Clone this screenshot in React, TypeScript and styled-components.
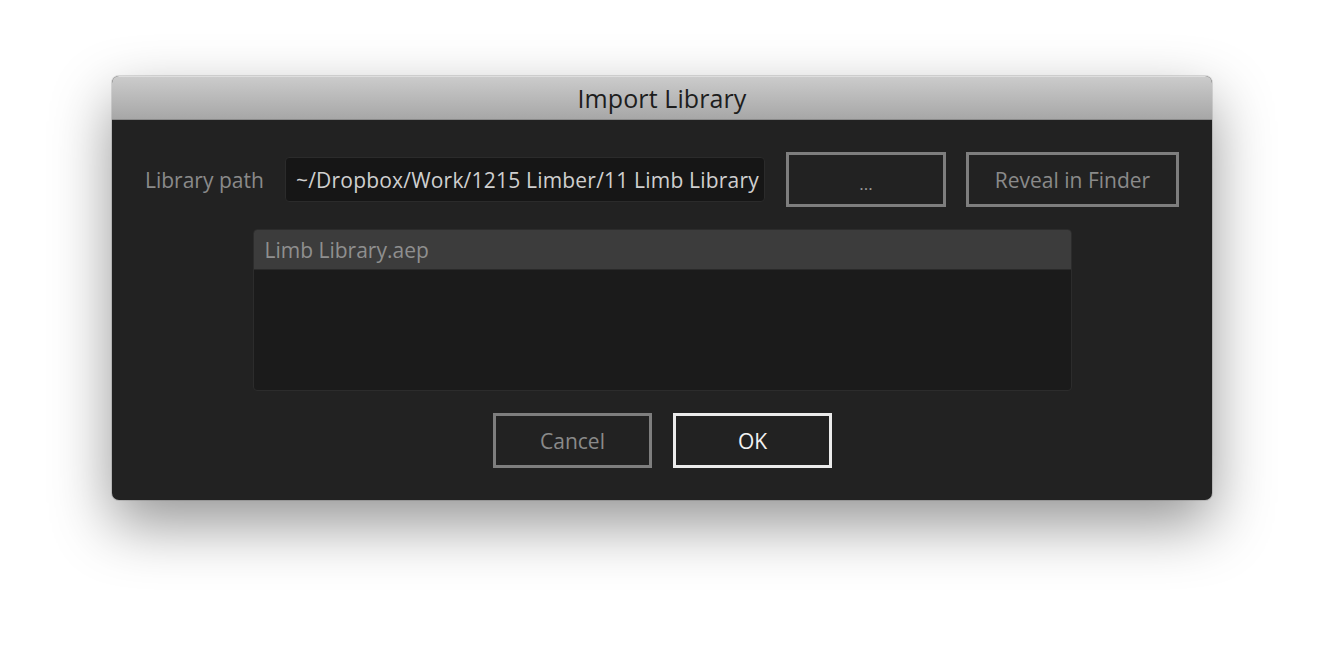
import React from "react";
import styled, { createGlobalStyle } from "styled-components";

const Global = createGlobalStyle`
  html, body { margin: 0; padding: 0; background: #ffffff; }
  body { font-family: "Open Sans", "Noto Sans", sans-serif; }
  * { box-sizing: border-box; }
`;

const Page = styled.div`
  width: 1324px;
  height: 648px;
  display: flex;
  justify-content: center;
  padding-top: 76px;
  background: #ffffff;
  overflow: hidden;
`;

const Window = styled.div`
  width: 1100px;
  height: 424px;
  display: flex;
  flex-direction: column;
  border-radius: 7px;
  overflow: hidden;
  background: #222222;
  box-shadow: 0 24px 60px rgba(0, 0, 0, 0.42), 0 0 0 1px rgba(0, 0, 0, 0.12);
`;

const TitleBar = styled.div`
  height: 44px;
  display: flex;
  align-items: center;
  justify-content: center;
  background: linear-gradient(#cbcbcb, #a7a7a7);
  border-top: 1px solid #dedede;
  border-bottom: 1px solid #8a8a8a;
  color: #1d1d1d;
  font-size: 25px;
  letter-spacing: 0.1px;
`;

const Body = styled.div`
  flex: 1;
  display: flex;
  flex-direction: column;
  align-items: center;
  padding: 32px 33px 32px;
  gap: 22px;
`;

const PathRow = styled.div`
  align-self: stretch;
  display: flex;
  align-items: center;
  height: 55px;
`;

const Label = styled.div`
  width: 140px;
  color: #8a8a8a;
  font-size: 21px;
`;

const PathInput = styled.div`
  width: 480px;
  height: 45px;
  display: flex;
  align-items: center;
  padding: 0 10px;
  background: #161616;
  border: 1px solid #2b2b2b;
  border-radius: 4px;
  color: #cfcfcf;
  font-size: 21px;
  letter-spacing: 0.2px;
  white-space: nowrap;
  overflow: hidden;
  margin-right: 21px;
`;

const Button = styled.div<{ $w: number; $primary?: boolean; $gap?: number }>`
  width: ${(p) => p.$w}px;
  height: 55px;
  display: flex;
  align-items: center;
  justify-content: center;
  border: 3px solid ${(p) => (p.$primary ? "#ebebeb" : "#7e7e7e")};
  color: ${(p) => (p.$primary ? "#f2f2f2" : "#8a8a8a")};
  font-size: 21px;
  margin-right: ${(p) => p.$gap ?? 0}px;
`;

const Dots = styled.span`
  font-size: 17px;
  padding-top: 8px;
  color: #9a9a9a;
`;

const ListBox = styled.div`
  width: 819px;
  height: 162px;
  display: flex;
  flex-direction: column;
  background: #1b1b1b;
  border: 1px solid #2c2c2c;
  border-radius: 4px;
  overflow: hidden;
`;

const ListItem = styled.div`
  height: 40px;
  display: flex;
  align-items: center;
  padding: 0 11px;
  background: #3c3c3c;
  color: #8f8f8f;
  font-size: 21px;
  border-bottom: 1px solid #2a2a2a;
`;

const ButtonRow = styled.div`
  display: flex;
  gap: 21px;
  padding-left: 1px;
`;

export default function App() {
  return (
    <>
      <Global />
      <Page>
        <Window>
          <TitleBar>Import Library</TitleBar>
          <Body>
            <PathRow>
              <Label>Library path</Label>
              <PathInput>~/Dropbox/Work/1215 Limber/11 Limb Library</PathInput>
              <Button $w={160} $gap={20}>
                <Dots>...</Dots>
              </Button>
              <Button $w={213}>Reveal in Finder</Button>
            </PathRow>
            <ListBox>
              <ListItem>Limb Library.aep</ListItem>
            </ListBox>
            <ButtonRow>
              <Button $w={159}>Cancel</Button>
              <Button $w={159} $primary>
                OK
              </Button>
            </ButtonRow>
          </Body>
        </Window>
      </Page>
    </>
  );
}
